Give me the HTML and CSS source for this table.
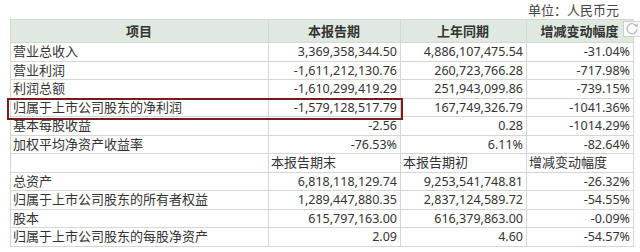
FILE: index.html
```html
<!DOCTYPE html>
<html lang="zh-CN">
<head>
    <meta charset="UTF-8">
    <title>主要财务数据</title>
    <link rel="stylesheet" href="styles.css">
</head>
<body>
    <div class="report">
        <div class="unit">单位：人民币元</div>
        <table class="fin-table">
            <colgroup>
                <col class="col-name">
                <col class="col-a">
                <col class="col-b">
                <col class="col-c">
            </colgroup>
            <thead>
                <tr>
                    <th>项目</th>
                    <th>本报告期</th>
                    <th>上年同期</th>
                    <th>增减变动幅度</th>
                </tr>
            </thead>
            <tbody>
                <tr><td>营业总收入</td><td class="num">3,369,358,344.50</td><td class="num">4,886,107,475.54</td><td class="num">-31.04%</td></tr>
                <tr><td>营业利润</td><td class="num">-1,611,212,130.76</td><td class="num">260,723,766.28</td><td class="num">-717.98%</td></tr>
                <tr><td>利润总额</td><td class="num">-1,610,299,419.29</td><td class="num">251,943,099.86</td><td class="num">-739.15%</td></tr>
                <tr><td>归属于上市公司股东的净利润</td><td class="num">-1,579,128,517.79</td><td class="num">167,749,326.79</td><td class="num">-1041.36%</td></tr>
                <tr><td>基本每股收益</td><td class="num">-2.56</td><td class="num">0.28</td><td class="num">-1014.29%</td></tr>
                <tr><td>加权平均净资产收益率</td><td class="num">-76.53%</td><td class="num">6.11%</td><td class="num">-82.64%</td></tr>
                <tr class="sub-head"><td></td><td>本报告期末</td><td>本报告期初</td><td>增减变动幅度</td></tr>
                <tr><td>总资产</td><td class="num">6,818,118,129.74</td><td class="num">9,253,541,748.81</td><td class="num">-26.32%</td></tr>
                <tr><td>归属于上市公司股东的所有者权益</td><td class="num">1,289,447,880.35</td><td class="num">2,837,124,589.72</td><td class="num">-54.55%</td></tr>
                <tr><td>股本</td><td class="num">615,797,163.00</td><td class="num">616,379,863.00</td><td class="num">-0.09%</td></tr>
                <tr><td>归属于上市公司股东的每股净资产</td><td class="num">2.09</td><td class="num">4.60</td><td class="num">-54.57%</td></tr>
            </tbody>
        </table>

        <!-- marked row -->
        <div class="highlight"></div>

        <button class="refresh" title="刷新">
            <svg width="14" height="14" viewBox="0 0 14 14">
                <path d="M11.5 4.5 A5 5 0 1 0 12 7" fill="none" stroke="#b5b5b5" stroke-width="1.2"/>
                <path d="M9.5 3.2 L12 4.6 L12.2 1.8" fill="none" stroke="#b5b5b5" stroke-width="1.2"/>
            </svg>
        </button>
    </div>
</body>
</html>
```

FILE: styles.css
```css
body {
    margin: 0;
    background: #ffffff;
    font-family: "Noto Sans", "Noto Sans CJK SC", sans-serif;
    color: #333;
}

.report {
    position: relative;
    padding: 2px 0 0 10px;
    width: 623px;
}

.unit {
    text-align: right;
    font-size: 13px;
    line-height: 16px;
    height: 17px;
    padding-right: 14px;
    color: #444;
}

.fin-table {
    border-collapse: collapse;
    width: 623px;
    table-layout: fixed;
    font-size: 13px;
}

.col-name { width: 258px; }
.col-a { width: 132px; }
.col-b { width: 126px; }
.col-c { width: 107px; }

.fin-table th,
.fin-table td {
    border: 1px solid #d6d6d6;
    padding: 0 3px 0 2px;
    white-space: nowrap;
    overflow: hidden;
}

.fin-table th {
    background: #dfe9df;
    font-weight: bold;
    line-height: 22px;
    text-align: center;
    color: #333;
}

.fin-table td {
    line-height: 17.5px;
    text-align: left;
}

.fin-table td.num {
    text-align: right;
    font-size: 12.5px;
}

.highlight {
    position: absolute;
    left: 7px;
    top: 98px;
    width: 396px;
    height: 22px;
    box-sizing: border-box;
    border: 2px solid #7a1c1c;
}

.refresh {
    position: absolute;
    left: 623px;
    top: 21px;
    width: 18px;
    height: 16px;
    padding: 0;
    border: 1px solid #cfcfcf;
    background: #fafafa;
    display: flex;
    align-items: center;
    justify-content: center;
}
```
